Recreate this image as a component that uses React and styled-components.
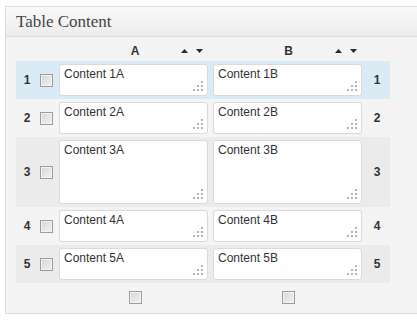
import styled, { createGlobalStyle } from "styled-components";

const GlobalStyle = createGlobalStyle`
  html, body {
    margin: 0;
    padding: 0;
    background: #ffffff;
    overflow: hidden;
  }
  body {
    font-family: "Liberation Sans", Arial, sans-serif;
  }
`;

const Page = styled.div`
  padding: 6px 0 0 5px;
`;

const Panel = styled.div`
  width: 420px;
  border: 1px solid #dcdcdc;
  border-right: none;
  background: #f4f4f4;
`;

const PanelHeader = styled.div`
  height: 29px;
  line-height: 29px;
  padding: 0 10px;
  background: linear-gradient(#f9f9f9, #ececec);
  border-bottom: 1px solid #dcdcdc;
  font-family: "Liberation Serif", "Times New Roman", serif;
  font-size: 17px;
  color: #464646;
`;

const PanelBody = styled.div`
  padding: 4px 0 0 10px;
`;

const COLUMNS = "21px 20px 153px 154px 26px";

const HeadRow = styled.div`
  display: grid;
  grid-template-columns: ${COLUMNS};
  height: 20px;
  align-items: center;
`;

const HeadCell = styled.div`
  grid-column: ${(p) => p.$col};
  display: grid;
  grid-template-columns: 1fr auto 1fr;
  align-items: center;
  padding: 0 7px 0 10px;
  font-size: 12px;
  font-weight: bold;
  color: #333;
`;

const Label = styled.span`
  grid-column: 2;
`;

const Sorter = styled.span`
  grid-column: 3;
  justify-self: end;
  display: flex;
  gap: 8px;
  margin-top: -1px;
`;

const Row = styled.div`
  display: grid;
  grid-template-columns: ${COLUMNS};
  align-items: center;
  padding: 3px 0;
  background: ${(p) => p.$bg};
  width: 374px;
`;

const Num = styled.div`
  text-align: center;
  font-size: 12px;
  font-weight: bold;
  color: #333;
  padding-left: ${(p) => p.$pad || 0}px;
`;

const CheckCell = styled.div`
  display: flex;
  justify-content: ${(p) => p.$justify || "flex-start"};
  padding-left: ${(p) => p.$pad || 0}px;
`;

const Check = styled.input.attrs({ type: "checkbox" })`
  appearance: none;
  margin: 0;
  width: 13px;
  height: 13px;
  border: 1px solid #9c9c9c;
  background: linear-gradient(135deg, #d6d6d6, #f2f2f2);
  box-shadow: inset 0 0 0 1px #f3f3f3;
  box-sizing: border-box;
`;

const FieldWrap = styled.div`
  position: relative;
  padding-left: ${(p) => p.$pad}px;
`;

const Field = styled.textarea`
  display: block;
  box-sizing: border-box;
  width: 149px;
  height: ${(p) => (p.$tall ? 64 : 32)}px;
  margin: 0;
  padding: 2px 4px;
  border: 1px solid #dadada;
  border-radius: 3px;
  background: #fff;
  resize: none;
  outline: none;
  font-family: "Liberation Sans", Arial, sans-serif;
  font-size: 12px;
  line-height: 15px;
  color: #333;
  overflow: hidden;
`;

const Grip = styled.svg`
  position: absolute;
  right: ${(p) => p.$right}px;
  bottom: 5px;
  pointer-events: none;
`;

const Footer = styled.div`
  display: grid;
  grid-template-columns: ${COLUMNS};
  height: 30px;
  align-items: start;
  padding-top: 8px;
  box-sizing: border-box;
`;

const Triangle = ({ down }) => (
  <svg width="7" height="4" viewBox="0 0 7 4">
    <path d={down ? "M0 0 H7 L3.5 4 Z" : "M0 4 H7 L3.5 0 Z"} fill="#2b2b2b" />
  </svg>
);

const GripDots = ({ right }) => (
  <Grip $right={right} width="10" height="10" viewBox="0 0 10 10">
    <g fill="#b4b4b4">
      <rect x="8" y="0" width="2" height="2" />
      <rect x="4" y="4" width="2" height="2" />
      <rect x="8" y="4" width="2" height="2" />
      <rect x="0" y="8" width="2" height="2" />
      <rect x="4" y="8" width="2" height="2" />
      <rect x="8" y="8" width="2" height="2" />
    </g>
  </Grip>
);

const rows = [
  { n: 1, bg: "#d9ebf5" },
  { n: 2, bg: "transparent" },
  { n: 3, bg: "#ebebeb", tall: true },
  { n: 4, bg: "transparent" },
  { n: 5, bg: "#ebebeb" },
];

export default function App() {
  return (
    <Page>
      <GlobalStyle />
      <Panel>
        <PanelHeader>Table Content</PanelHeader>
        <PanelBody>
          <HeadRow>
            <HeadCell $col={3}>
              <Label>A</Label>
              <Sorter>
                <Triangle />
                <Triangle down />
              </Sorter>
            </HeadCell>
            <HeadCell $col={4}>
              <Label>B</Label>
              <Sorter>
                <Triangle />
                <Triangle down />
              </Sorter>
            </HeadCell>
          </HeadRow>
          {rows.map((r) => (
            <Row key={r.n} $bg={r.bg}>
              <Num $pad={1}>{r.n}</Num>
              <CheckCell $pad={3}>
                <Check />
              </CheckCell>
              <FieldWrap $pad={2}>
                <Field $tall={r.tall} defaultValue={`Content ${r.n}A`} />
                <GripDots right={7} />
              </FieldWrap>
              <FieldWrap $pad={3}>
                <Field $tall={r.tall} defaultValue={`Content ${r.n}B`} />
                <GripDots right={7} />
              </FieldWrap>
              <Num $pad={0}>{r.n}</Num>
            </Row>
          ))}
          <Footer>
            <span />
            <span />
            <CheckCell $justify="center" $pad={3}>
              <Check />
            </CheckCell>
            <CheckCell $justify="center" $pad={3}>
              <Check />
            </CheckCell>
          </Footer>
        </PanelBody>
      </Panel>
    </Page>
  );
}
